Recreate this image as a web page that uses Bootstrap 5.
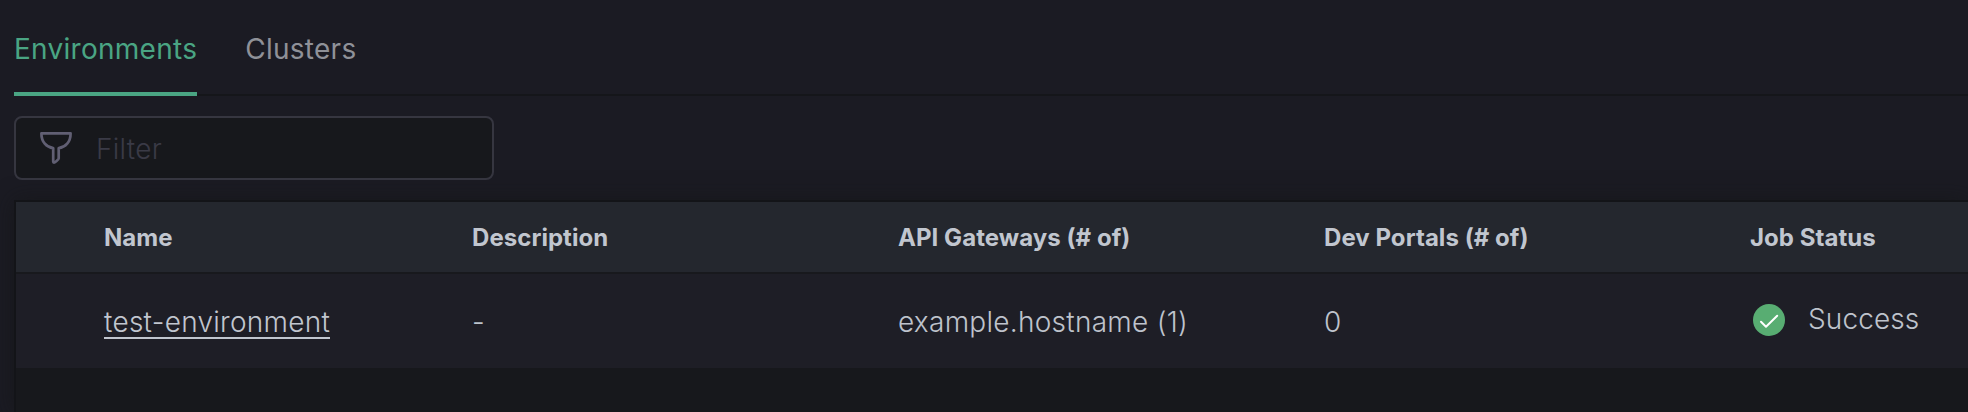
<!DOCTYPE html>
<html lang="en">
<head>
<meta charset="utf-8">
<meta name="viewport" content="width=device-width, initial-scale=1">
<title>Environments</title>
<link href="https://cdn.jsdelivr.net/npm/bootstrap@5.3.0/dist/css/bootstrap.min.css" rel="stylesheet">
<style>
body{background:#1b1b23;color:#bec3cc;font-family:Inter,"Liberation Sans",sans-serif;font-size:28px;font-weight:300;line-height:34px;letter-spacing:.27px}
.page{height:412px;padding-left:14px}
.env-tabs{height:96px;gap:48px;box-shadow:inset 0 -2px #15161a}
.env-tabs .nav-link{height:96px;padding:32px 0 0;color:#8f9198;font-weight:400;border:0;border-bottom:4px solid transparent;border-radius:0}
.env-tabs .nav-link.active{color:#4aa583;border-color:#4aa583}
.filter-box{width:480px;height:64px;margin-top:20px;padding:0 24px;gap:24px;background:#17181c;border:2px solid #363640;border-radius:8px}
.filter-box .form-control{font-size:28px;font-weight:300;line-height:34px;letter-spacing:.27px;padding:1px 0 0;height:auto}
.filter-box .form-control::placeholder{color:#3a3a46;opacity:1}
.grid-panel{margin-top:20px;background:#17181c;border:2px solid #131418;border-width:2px 0 0 2px;box-shadow:0 0 20px rgba(20,21,22,.6)}
.env-table{table-layout:fixed;width:2160px;color:inherit;border-collapse:separate;border-spacing:0;--bs-table-bg:transparent;--bs-table-color:#bec3cc}
.env-table>:not(caption)>*>*{padding:0;border:0;box-shadow:none;vertical-align:middle}
.env-table.env-table thead th{height:72px;padding-top:2px;background:#24272e;border-bottom:2px solid #18191d;font-size:24px;line-height:30px;font-weight:700;letter-spacing:.05px;color:#c1c6cf}
.env-table.env-table tbody td{height:94px;background:#1e1e26;padding-top:2px}
.env-table a{display:inline-block;color:#c1c6cf;text-decoration:none;line-height:30px;border-bottom:2px solid #c1c6cf}
.status{gap:22px;letter-spacing:.1px;padding-bottom:6px}
.status svg{margin-top:2px}
</style>
</head>
<body>
<div class="page d-flex flex-column overflow-hidden">
  <ul class="nav env-tabs flex-shrink-0">
    <li class="nav-item"><a class="nav-link active" href="#">Environments</a></li>
    <li class="nav-item"><a class="nav-link" href="#">Clusters</a></li>
  </ul>
  <div class="filter-box d-flex align-items-center flex-shrink-0">
    <svg width="32" height="32" viewBox="0 0 32 32" fill="none" stroke="#615f73" stroke-width="2.7" stroke-linejoin="round" class="flex-shrink-0"><path d="M1.4 1.4H30.6C30.6 10 25.5 15.3 18.7 16.2V26.6C18.7 27.6 14.6 30.6 14 30.6Q13.2 30.6 13.2 29.6V16.2C6.5 15.3 1.4 10 1.4 1.4Z"/></svg>
    <input class="form-control bg-transparent border-0 shadow-none" type="text" placeholder="Filter" aria-label="Filter">
  </div>
  <div class="grid-panel flex-grow-1">
    <table class="table env-table mb-0">
      <colgroup><col style="width:88px"><col style="width:368px"><col style="width:426px"><col style="width:426px"><col style="width:426px"><col style="width:426px"></colgroup>
      <thead><tr><th></th><th>Name</th><th>Description</th><th>API Gateways (# of)</th><th>Dev Portals (# of)</th><th>Job Status</th></tr></thead>
      <tbody><tr>
        <td></td>
        <td><a href="#">test-environment</a></td>
        <td>-</td>
        <td>example.hostname (1)</td>
        <td>0</td>
        <td><div class="status d-flex align-items-center"><svg width="36" height="32" viewBox="0 0 36 32"><circle cx="19" cy="16" r="16" fill="#58ad72"/><path d="M11 17.8L16 22.7L27.2 11.8" fill="none" stroke="#fff" stroke-width="2" stroke-linecap="round" stroke-linejoin="round"/></svg><span>Success</span></div></td>
      </tr></tbody>
    </table>
  </div>
</div>
<script src="https://cdn.jsdelivr.net/npm/bootstrap@5.3.0/dist/js/bootstrap.bundle.min.js"></script>
</body>
</html>
